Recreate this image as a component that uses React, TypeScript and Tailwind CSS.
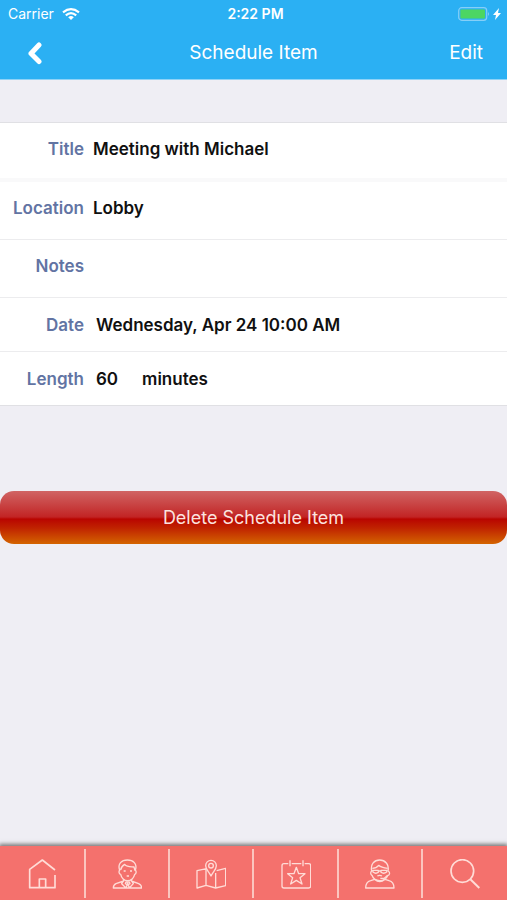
import type { ReactNode } from 'react'

const rowCls = 'flex items-center border-[#ececee] bg-white'
const labelCls = 'w-[84px] shrink-0 text-right font-semibold text-[#6274a3]'
const valueCls = 'flex-1 font-semibold text-[#101010]'

function TabIcon({ children }: { children: ReactNode }) {
  return (
    <svg
      aria-hidden="true"
      className="h-[30px] w-[30px]"
      viewBox="0 0 90 90"
      fill="none"
      stroke="currentColor"
      strokeWidth="4"
      strokeLinejoin="round"
    >
      {children}
    </svg>
  )
}

const tabs: { name: string; icon: ReactNode }[] = [
  {
    name: 'Home',
    icon: (
      <TabIcon>
        <path d="M81 48V86H5V31L43 3l38 30M34 86V60h19v26" strokeWidth="5" />
      </TabIcon>
    ),
  },
  {
    name: 'Speakers',
    icon: (
      <TabIcon>
        <path d="M23 34C16 14 29 3 46 3s31 11 24 31c4 2 3 11-2 12-3 12-12 19-21 19S29 58 26 46c-6-1-6-10-3-12z" />
        <path d="M26 33c1-10 7-14 12-17 7 9 20 7 28 8l3 11M35 36h6M54 36h6M44 51h7" />
        <path d="M35 61v5L12 74c-7 3-8 6-8 13h85c0-7-3-10-9-13l-22-8v-5M35 65l-6 9 13 13 5-14 5 14 12-13-6-9M42 69h10l2 5-7 4-7-4z" />
      </TabIcon>
    ),
  },
  {
    name: 'Map',
    icon: (
      <TabIcon>
        <path d="M32 29L3 35v52l27-8 29 8 30-7V28l-27 7M30 30v49M59 42v45" />
        <path d="M45 51C38 37 29 31 29 20a16 16 0 0 1 32 0c0 11-9 17-16 31z" fill="#f4716d" />
        <circle cx="45" cy="20" r="7" />
      </TabIcon>
    ),
  },
  {
    name: 'Agenda',
    icon: (
      <TabIcon>
        <path d="M22 14H9q-6 0-6 6v61q0 6 6 6h74q6 0 6-6V20q0-6-6-6H71M32 14h29M27 4v18M66 4v18" />
        <path d="M46 25l7 19h19L57 56l6 19-17-11-17 11 6-19-15-12h19z" />
      </TabIcon>
    ),
  },
  {
    name: 'Attendees',
    icon: (
      <TabIcon>
        <path d="M20 36C16 15 28 3 44 3s29 13 25 33c7 3 6 12-1 14-4 9-13 15-24 15S24 58 21 49c-5-3-5-10-1-13z" />
        <path d="M22 28c8 0 14-3 19-9 6 6 15 8 27 9M23 34h17v6q-8 6-16-1zM48 34h18l-1 5q-9 7-17 1zM40 36h8M37 51q7-4 14 0M46 58h12l10-9" />
        <path d="M29 61l-12 4Q2 69 2 87h85q0-18-15-22l-12-4M29 61q15 14 31 0" />
      </TabIcon>
    ),
  },
  {
    name: 'Search',
    icon: (
      <TabIcon>
        <circle cx="37" cy="36" r="34" strokeWidth="5" />
        <path d="M61 61l27 26" strokeWidth="6" />
      </TabIcon>
    ),
  },
]

function StatusBar() {
  return (
    <div className="grid h-7 grid-cols-3 items-center pr-1 pl-2 text-sm">
      <div className="flex items-center gap-2">
        <span>Carrier</span>
        <svg aria-hidden="true" className="h-3 w-[18px]" viewBox="0 0 18 12" fill="none" stroke="currentColor" strokeWidth="2.2">
          <path d="M1 4.4Q9-2 17 4.4M3.8 7.4Q9 3 14.2 7.4" />
          <path d="M9 12L6.2 9.2Q9 7 11.8 9.2z" fill="currentColor" stroke="none" />
        </svg>
      </div>
      <span className="text-center font-semibold">2:22 PM</span>
      <svg aria-hidden="true" className="h-[14px] w-[45px] justify-self-end" viewBox="0 0 45 14">
        <rect x=".7" y=".7" width="28" height="12.6" rx="3" fill="none" stroke="#85cff8" strokeWidth="1.2" />
        <rect x="2.4" y="2.4" width="24.6" height="9.2" rx="1" fill="#4cd663" />
        <path d="M30 5q2 2 0 4z" fill="#85cff8" />
        <path d="M41 1l-6 7h3l-1 5 6-7h-3z" fill="currentColor" />
      </svg>
    </div>
  )
}

export default function App() {
  return (
    <div className="flex min-h-screen flex-col bg-[#efeef4] font-['Inter',sans-serif]">
      <header className="border-b border-[#8fd3f7] bg-[#2bb0f3] text-white">
        <StatusBar />
        <div className="grid h-[51px] grid-cols-3 items-center px-6 text-[19px]">
          <button type="button" aria-label="Back" className="cursor-pointer justify-self-start">
            <svg className="h-6 w-5" viewBox="0 0 20 24" fill="none" stroke="currentColor" strokeWidth="5" strokeLinecap="round" strokeLinejoin="round">
              <path d="M15 3L7 11.5l8 8" />
            </svg>
          </button>
          <h1 className="text-center whitespace-nowrap">Schedule Item</h1>
          <button type="button" className="cursor-pointer justify-self-end">
            Edit
          </button>
        </div>
      </header>

      <main className="flex-1 pt-[42px]">
        <dl className="border-y border-[#e0e0e4] text-[17px] leading-6">
          <div className={`${rowCls} h-[59px] border-b-4 border-[#f9f9fa] pb-1`}>
            <dt className={labelCls}>Title</dt>
            <dd className={`${valueCls} pl-[9px]`}>Meeting with Michael</dd>
          </div>
          <div className={`${rowCls} h-[58px] border-b pb-1.5`}>
            <dt className={labelCls}>Location</dt>
            <dd className={`${valueCls} pl-[9px]`}>Lobby</dd>
          </div>
          <div className={`${rowCls} h-[58px] border-b pb-1.5`}>
            <dt className={labelCls}>Notes</dt>
            <dd className={`${valueCls} pl-[9px]`} />
          </div>
          <div className={`${rowCls} h-[54px] border-b`}>
            <dt className={labelCls}>Date</dt>
            <dd className={`${valueCls} pl-3`}>Wednesday, Apr 24 10:00 AM</dd>
          </div>
          <div className={`${rowCls} h-[53px]`}>
            <dt className={labelCls}>Length</dt>
            <dd className={`${valueCls} flex gap-6 pl-3`}>
              <span>60</span>
              <span>minutes</span>
            </dd>
          </div>
        </dl>

        <button
          type="button"
          className="mt-[85px] h-[53px] w-full cursor-pointer rounded-[14px] bg-[linear-gradient(#d06464_0%,#c94444_25%,#c22424_49%,#b90500_53%,#c02300_70%,#d46400_100%)] text-lg text-[#fbe3df]"
        >
          Delete Schedule Item
        </button>
      </main>

      <nav className="bg-[#f4716d] pt-[3px] pb-0.5 pl-0.5 text-[#ffdcd7] shadow-[0_-1px_4px_1px_#777]">
        <ul className="grid grid-cols-6 divide-x-2 divide-[#fbc5bf]">
          {tabs.map((tab) => (
            <li key={tab.name}>
              <a href="#" aria-label={tab.name} className="flex h-[49px] items-center justify-center">
                {tab.icon}
              </a>
            </li>
          ))}
        </ul>
      </nav>
    </div>
  )
}
